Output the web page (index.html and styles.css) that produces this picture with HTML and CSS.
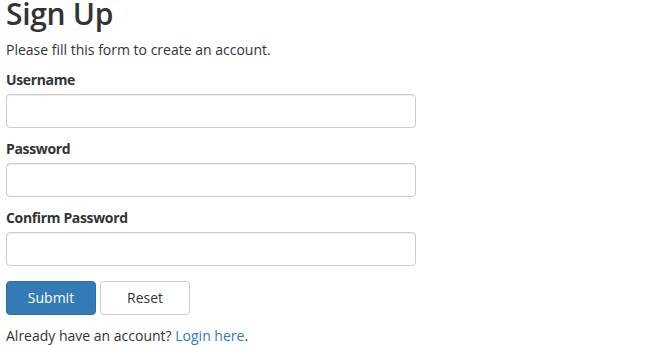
FILE: index.html
```html
<!DOCTYPE html>
<html lang="en">
<head>
<meta charset="utf-8">
<title>Sign Up</title>
<link rel="stylesheet" href="styles.css">
</head>
<body>
<div class="wrapper">
  <h2 class="title">Sign Up</h2>
  <p class="intro">Please fill this form to create an account.</p>
  <form class="signup-form">
    <div class="form-group">
      <label class="field-label">Username</label>
      <input type="text" class="form-control">
    </div>
    <div class="form-group">
      <label class="field-label">Password</label>
      <input type="password" class="form-control">
    </div>
    <div class="form-group">
      <label class="field-label">Confirm Password</label>
      <input type="password" class="form-control">
    </div>
    <div class="actions">
      <button type="button" class="btn btn-primary">Submit</button>
      <button type="button" class="btn btn-default">Reset</button>
    </div>
    <p class="login-note">Already have an account? <a href="#" class="login-link">Login here</a>.</p>
  </form>
</div>
</body>
</html>
```
FILE: styles.css
```css
html, body {
  margin: 0;
  padding: 0;
  background: #fff;
}
body {
  font-family: "Open Sans", "Noto Sans", "Liberation Sans", sans-serif;
  font-size: 14px;
  line-height: 20px;
  color: #333;
}
.wrapper {
  width: 410px;
  padding: 0 6px;
}
.title {
  margin: 0 0 12px;
  font-size: 30px;
  line-height: 28px;
  font-weight: 600;
  letter-spacing: -0.3px;
  color: #333;
}
.intro {
  margin: 0 0 10px;
}
.form-group {
  margin-bottom: 11px;
}
.field-label {
  display: block;
  font-weight: 700;
  letter-spacing: -0.35px;
  margin-bottom: 4px;
}
.form-control {
  display: block;
  box-sizing: border-box;
  width: 100%;
  height: 34px;
  margin: 0;
  padding: 6px 12px;
  border: 1px solid #ccc;
  border-radius: 4px;
  box-shadow: inset 0 1px 1px rgba(0,0,0,.075);
  font: inherit;
  color: #555;
  background: #fff;
}
.actions {
  display: flex;
  gap: 4px;
  margin-top: 15px;
}
.btn {
  box-sizing: border-box;
  width: 90px;
  height: 34px;
  padding: 0;
  border: 1px solid transparent;
  border-radius: 4px;
  font: inherit;
  cursor: pointer;
}
.btn-primary {
  color: #fff;
  background: #337ab7;
  border-color: #2e6da4;
}
.btn-default {
  color: #333;
  background: #fff;
  border-color: #ccc;
}
.login-note {
  margin: 11px 0 0;
}
.login-link {
  color: #337ab7;
  text-decoration: none;
}
```
